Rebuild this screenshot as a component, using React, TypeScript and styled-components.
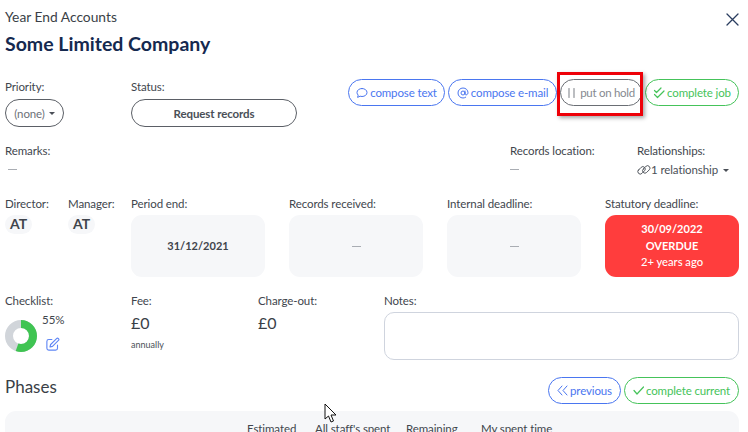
import React from "react";
import styled, { createGlobalStyle } from "styled-components";

const Global = createGlobalStyle`
  html, body { margin: 0; padding: 0; background: #fff; overflow: hidden; }
  body { font-family: Lato, "Liberation Sans", sans-serif; color: #3a3f47; }
`;

const Page = styled.div`
  position: relative;
  width: 748px;
  height: 432px;
  overflow: hidden;
  box-sizing: border-box;
  padding: 8px 9px 0 5px;
`;
const Header = styled.header`
  display: flex;
  justify-content: space-between;
  align-items: flex-start;
  height: 71px;
`;
const Kicker = styled.div`
  font-size: 13.8px;
  line-height: 17px;
  color: #3a3f47;
`;
const Title = styled.h1`
  margin: 5px 0 0;
  font-size: 19.5px;
  line-height: 28px;
  font-weight: 700;
  color: #15294f;
`;
const Close = styled.button`
  border: 0;
  background: none;
  padding: 0;
  margin: 5px 0 0;
  width: 13px;
  height: 13px;
  display: flex;
  color: #2a3d5f;
`;
const Label = styled.div`
  font-size: 11.5px;
  letter-spacing: -0.1px;
  line-height: 15px;
  color: #41464d;
  white-space: nowrap;
`;
const Dash = styled.div<{ $indent?: boolean; $center?: boolean }>`
  width: 9px;
  height: 1px;
  background: #a9adb3;
  margin: ${(p) => (p.$center ? "0" : p.$indent ? "11px 0 0 3px" : "11px 0 0 0")};
`;
const TopRow = styled.div`
  display: flex;
  height: 64px;
`;
const PriorityCol = styled.div`
  width: 126px;
`;
const StatusCol = styled.div`
  width: 207px;
`;
const Pill = styled.button`
  font-family: inherit;
  box-sizing: border-box;
  height: 28px;
  margin-top: 5px;
  border: 1px solid #5b5f66;
  border-radius: 14px;
  background: #fff;
  font-size: 11.5px;
  letter-spacing: -0.1px;
  color: #4a4f57;
  display: flex;
  align-items: center;
  justify-content: center;
  padding: 0;
`;
const PriorityPill = styled(Pill)`
  width: 59px;
  color: #6d7178;
  gap: 4px;
`;
const StatusPill = styled(Pill)`
  width: 166px;
  font-weight: 700;
`;
const Caret = styled.span`
  display: inline-block;
  width: 0;
  height: 0;
  border-left: 3px solid transparent;
  border-right: 3px solid transparent;
  border-top: 3px solid #4a4f57;
`;
const Actions = styled.div`
  display: flex;
  gap: 3px;
  margin-left: 10px;
  height: 27px;
`;
const palette = { blue: "#4a76f0", green: "#45c35a", grey: "#6a6e74" };
const ActionBtn = styled.button<{ $tone: "blue" | "green" | "grey"; $w: number }>`
  font-family: inherit;
  box-sizing: border-box;
  width: ${(p) => p.$w}px;
  height: 27px;
  border-radius: 14px;
  background: #fff;
  border: 1px solid ${(p) => palette[p.$tone]};
  color: ${(p) => (p.$tone === "grey" ? "#85898f" : palette[p.$tone])};
  font-size: 11.5px;
  letter-spacing: ${(p) => (p.$tone === "grey" ? "-0.3px" : "-0.13px")};
  display: flex;
  align-items: center;
  justify-content: center;
  gap: ${(p) => (p.$tone === "grey" ? "3px" : "2px")};
  padding: 0;
  white-space: nowrap;
`;
const Highlight = styled.div`
  position: absolute;
  left: 557px;
  top: 72px;
  width: 86px;
  height: 44px;
  box-sizing: border-box;
  border: 3px solid #ee0008;
  box-shadow: 2px 2px 4px rgba(0, 0, 0, 0.35);
  pointer-events: none;
`;
const RemarksRow = styled.div`
  display: flex;
  height: 53px;
`;
const Remarks = styled.div`
  width: 505px;
`;
const Location = styled.div`
  width: 127px;
`;
const Rel = styled.div`
  font-size: 11.5px;
  letter-spacing: -0.1px;
  line-height: 16px;
  margin-top: 4px;
  display: flex;
  align-items: center;
  white-space: nowrap;
  color: #4b5057;
`;
const RelCaret = styled(Caret)`
  margin-left: 5px;
`;
const DatesRow = styled.div`
  display: flex;
  height: 97px;
`;
const PersonCol = styled.div<{ $w: number }>`
  width: ${(p) => p.$w}px;
`;
const Initials = styled.div`
  width: 27px;
  height: 19px;
  margin-top: 4px;
  border-radius: 10px;
  background: #f6f7f9;
  font-size: 14px;
  font-weight: 700;
  line-height: 17px;
  text-align: center;
  color: #3f444b;
`;
const DateCol = styled.div`
  width: 158px;
`;
const DateCard = styled.div<{ $alert?: boolean }>`
  box-sizing: border-box;
  width: 134px;
  height: 62px;
  margin-top: 4px;
  border-radius: 11px;
  background: ${(p) => (p.$alert ? "#ff3d3d" : "#f6f7f9")};
  color: ${(p) => (p.$alert ? "#fff" : "#3f444b")};
  font-size: 11px;
  font-weight: 700;
  line-height: 16.5px;
  display: flex;
  flex-direction: column;
  align-items: center;
  justify-content: center;
`;
const AgoLine = styled.span`
  font-weight: 500;
  font-size: 11.2px;
`;
const InfoRow = styled.div`
  display: flex;
  height: 81px;
`;
const CheckCol = styled.div`
  width: 126px;
`;
const CheckBody = styled.div`
  display: flex;
  margin-top: 12px;
`;
const Percent = styled.div`
  font-size: 11.5px;
  line-height: 14px;
  color: #41464d;
`;
const PercentCol = styled.div`
  margin: -7px 0 0 5px;
  display: flex;
  flex-direction: column;
  align-items: flex-start;
`;
const EditIcon = styled.svg`
  width: 15px;
  height: 15px;
  margin: 10px 0 0 3px;
`;
const FeeCol = styled.div`
  width: 127px;
`;
const ChargeCol = styled.div`
  width: 126px;
`;
const Money = styled.div`
  font-size: 16px;
  line-height: 20px;
  margin-top: 5px;
  color: #3a3f47;
`;
const Sub = styled.div`
  font-size: 9px;
  line-height: 12px;
  margin-top: 6px;
  color: #4b5057;
`;
const NotesCol = styled.div`
  width: 355px;
`;
const Notes = styled.div`
  box-sizing: border-box;
  height: 48px;
  margin-top: 4px;
  border: 1px solid #cfd4de;
  border-radius: 10px;
  background: #fff;
`;
const PhaseHead = styled.div`
  display: flex;
  justify-content: space-between;
  align-items: flex-start;
  height: 37px;
`;
const PhaseTitle = styled.h2`
  margin: 1px 0 0;
  font-size: 17px;
  line-height: 24px;
  font-weight: 400;
  color: #3a3f47;
`;
const PhaseActions = styled.div`
  display: flex;
  gap: 3px;
  margin-top: 3px;
`;
const TableHead = styled.div`
  height: 60px;
  border-radius: 11px 11px 0 0;
  background: #f6f7f9;
  padding-left: 242px;
  padding-top: 10px;
  display: flex;
  font-size: 11.5px;
  letter-spacing: -0.1px;
  line-height: 15px;
  color: #41464d;
`;
const Th = styled.div<{ $w: number }>`
  width: ${(p) => p.$w}px;
  white-space: nowrap;
`;
const Cursor = styled.svg`
  position: absolute;
  left: 324px;
  top: 403px;
  width: 13px;
  height: 21px;
`;

const stroke = { fill: "none", stroke: "currentColor", strokeLinecap: "round", strokeLinejoin: "round" } as const;

export default function App() {
  return (
    <Page>
      <Global />
      <Header>
        <div>
          <Kicker>Year End Accounts</Kicker>
          <Title>Some Limited Company</Title>
        </div>
        <Close aria-label="close">
          <svg width="13" height="13" viewBox="0 0 13 13"><path d="M1 1l11 11M12 1L1 12" {...stroke} strokeWidth="1.3" /></svg>
        </Close>
      </Header>
      <TopRow>
        <PriorityCol>
          <Label>Priority:</Label>
          <PriorityPill>(none)<Caret /></PriorityPill>
        </PriorityCol>
        <StatusCol>
          <Label>Status:</Label>
          <StatusPill>Request records</StatusPill>
        </StatusCol>
        <Actions>
          <ActionBtn $tone="blue" $w={97}>
            <svg width="12" height="12" viewBox="0 0 12 12"><path d="M6 1.5c2.8 0 5 1.7 5 4s-2.2 4-5 4c-.7 0-1.3-.1-1.9-.3L1.6 10.4l.6-2.3C1.4 7.4 1 6.5 1 5.5c0-2.3 2.2-4 5-4z" {...stroke} /></svg>
            compose text
          </ActionBtn>
          <ActionBtn $tone="blue" $w={109}>
            <svg width="12" height="12" viewBox="0 0 12 12"><circle cx="6" cy="6" r="2" {...stroke} /><path d="M8 4v2.8c0 1.8 3 1.4 3-1C11 3 8.8 1 6 1S1 3.2 1 6s2.2 5 5 5c1 0 1.900-.3 2.700-.8" {...stroke} /></svg>
            compose e-mail
          </ActionBtn>
          <ActionBtn $tone="grey" $w={82}>
            <svg width="10" height="10" viewBox="0 0 10 10"><path d="M2 0.5v9M7 0.5v9" {...stroke} strokeWidth="1.1" /></svg>
            put on hold
          </ActionBtn>
          <ActionBtn $tone="green" $w={94}>
            <svg width="12" height="12" viewBox="0 0 12 12"><path d="M1.5 3.5l2 2L8 1M1.5 7.5l3 3L11 4" {...stroke} strokeWidth="1.2" /></svg>
            complete job
          </ActionBtn>
        </Actions>
      </TopRow>
      <RemarksRow>
        <Remarks>
          <Label>Remarks:</Label>
          <Dash $indent />
        </Remarks>
        <Location>
          <Label>Records location:</Label>
          <Dash />
        </Location>
        <div>
          <Label>Relationships:</Label>
          <Rel>
            <svg width="14" height="14" viewBox="0 0 14 14"><g {...stroke} strokeWidth="0.9"><rect x="0.3" y="5" width="8.5" height="4.8" rx="2.4" transform="rotate(-45 4.5 7.4)" /><rect x="5" y="4" width="8.5" height="4.8" rx="2.4" transform="rotate(-45 9.3 6.4)" /></g></svg>
            1 relationship<RelCaret />
          </Rel>
        </div>
      </RemarksRow>
      <DatesRow>
        <PersonCol $w={63}>
          <Label>Director:</Label>
          <Initials>AT</Initials>
        </PersonCol>
        <PersonCol $w={63}>
          <Label>Manager:</Label>
          <Initials>AT</Initials>
        </PersonCol>
        <DateCol>
          <Label>Period end:</Label>
          <DateCard>31/12/2021</DateCard>
        </DateCol>
        <DateCol>
          <Label>Records received:</Label>
          <DateCard><Dash $center /></DateCard>
        </DateCol>
        <DateCol>
          <Label>Internal deadline:</Label>
          <DateCard><Dash $center /></DateCard>
        </DateCol>
        <div>
          <Label>Statutory deadline:</Label>
          <DateCard $alert>
            <span>30/09/2022</span>
            <span>OVERDUE</span>
            <AgoLine>2+ years ago</AgoLine>
          </DateCard>
        </div>
      </DatesRow>
      <InfoRow>
        <CheckCol>
          <Label>Checklist:</Label>
          <CheckBody>
            <svg width="32" height="32" viewBox="0 0 32 32">
              <circle cx="16" cy="16" r="12" fill="none" stroke="#d1d5da" strokeWidth="8" />
              <circle cx="16" cy="16" r="12" fill="none" stroke="#3fc452" strokeWidth="8" strokeDasharray="41.5 75.4" transform="rotate(-90 16 16)" />
            </svg>
            <PercentCol>
              <Percent>55%</Percent>
              <EditIcon viewBox="0 0 24 24">
                <path d="M11 4H6a3 3 0 0 0-3 3v11a3 3 0 0 0 3 3h11a3 3 0 0 0 3-3v-5" fill="none" stroke="#5f86f5" strokeWidth="1.8" strokeLinecap="round" />
                <path d="M18.5 2.5a2.1 2.1 0 0 1 3 3L12 15l-4 1 1-4z" fill="none" stroke="#5f86f5" strokeWidth="1.8" strokeLinejoin="round" />
              </EditIcon>
            </PercentCol>
          </CheckBody>
        </CheckCol>
        <FeeCol>
          <Label>Fee:</Label>
          <Money>£0</Money>
          <Sub>annually</Sub>
        </FeeCol>
        <ChargeCol>
          <Label>Charge-out:</Label>
          <Money>£0</Money>
        </ChargeCol>
        <NotesCol>
          <Label>Notes:</Label>
          <Notes />
        </NotesCol>
      </InfoRow>
      <PhaseHead>
        <PhaseTitle>Phases</PhaseTitle>
        <PhaseActions>
          <ActionBtn $tone="blue" $w={73}>
            <svg width="11" height="11" viewBox="0 0 11 11"><path d="M5 1L1 5.5 5 10M10 1L6 5.5 10 10" {...stroke} /></svg>
            previous
          </ActionBtn>
          <ActionBtn $tone="green" $w={115}>
            <svg width="11" height="11" viewBox="0 0 11 11"><path d="M1 5.5l3 3.5 6.5-7" {...stroke} strokeWidth="1.2" /></svg>
            complete current
          </ActionBtn>
        </PhaseActions>
      </PhaseHead>
      <TableHead>
        <Th $w={68}>Estimated</Th>
        <Th $w={91}>All staff's spent</Th>
        <Th $w={75}>Remaining</Th>
        <Th $w={80}>My spent time</Th>
      </TableHead>
      <Highlight />
      <Cursor viewBox="0 0 13 21">
        <path d="M1 1v15l3.5-3 2.5 6 2.5-1-2.5-6h5z" fill="#fff" stroke="#111" strokeWidth="1" strokeLinejoin="round" />
      </Cursor>
    </Page>
  );
}
